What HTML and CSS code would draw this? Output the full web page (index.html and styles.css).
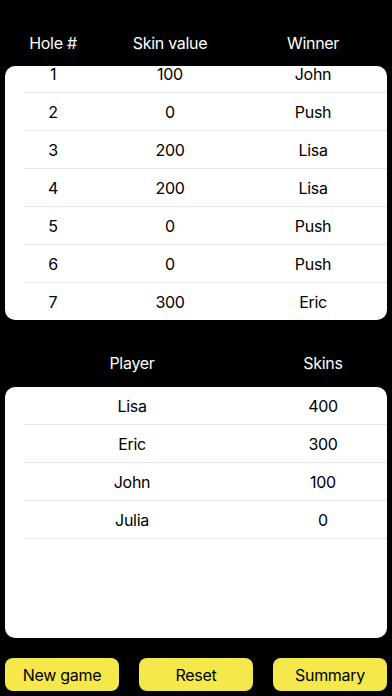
FILE: index.html
```html
<!DOCTYPE html>
<html>
<head>
<meta charset="utf-8">
<link rel="stylesheet" href="styles.css">
</head>
<body>
<div class="page">
  <div class="head head-holes">
    <span>Hole #</span><span>Skin value</span><span>Winner</span>
  </div>
  <div class="card card-holes">
    <div class="list list-scrolled">
      <div class="row row-holes"><span>1</span><span>100</span><span>John</span></div>
      <div class="row row-holes"><span>2</span><span>0</span><span>Push</span></div>
      <div class="row row-holes"><span>3</span><span>200</span><span>Lisa</span></div>
      <div class="row row-holes"><span>4</span><span>200</span><span>Lisa</span></div>
      <div class="row row-holes"><span>5</span><span>0</span><span>Push</span></div>
      <div class="row row-holes"><span>6</span><span>0</span><span>Push</span></div>
      <div class="row row-holes row-last"><span>7</span><span>300</span><span>Eric</span></div>
    </div>
  </div>
  <div class="head head-players">
    <span>Player</span><span>Skins</span>
  </div>
  <div class="card card-players">
    <div class="list">
      <div class="row row-players"><span>Lisa</span><span>400</span></div>
      <div class="row row-players"><span>Eric</span><span>300</span></div>
      <div class="row row-players"><span>John</span><span>100</span></div>
      <div class="row row-players"><span>Julia</span><span>0</span></div>
    </div>
  </div>
  <div class="buttons">
    <button class="btn">New game</button>
    <button class="btn">Reset</button>
    <button class="btn">Summary</button>
  </div>
</div>
</body>
</html>
```
FILE: styles.css
```css
html, body {
  margin: 0;
  padding: 0;
  background: #000;
}
body {
  font-family: Inter, "Noto Sans", sans-serif;
  font-size: 16px;
  letter-spacing: -0.3px;
  color: #000;
}
.page {
  width: 392px;
  height: 696px;
  padding: 0 5px;
  box-sizing: border-box;
  display: flex;
  flex-direction: column;
}
.head {
  display: grid;
  height: 38px;
  align-items: center;
  color: #fff;
  text-align: center;
}
.head-holes {
  margin-top: 24px;
  margin-bottom: 4px;
}
.head-players {
  margin-top: 24px;
  margin-bottom: 5px;
}
.head-holes, .row-holes {
  grid-template-columns: 96px 138px 148px;
}
.head-players, .row-players {
  grid-template-columns: 254px 128px;
}
.card {
  background: #fff;
  border-radius: 10px;
  overflow: hidden;
}
.card-holes {
  height: 254px;
}
.card-players {
  height: 251px;
}
.list-scrolled {
  margin-top: -11px;
}
.row {
  display: grid;
  height: 38px;
  align-items: center;
  text-align: center;
  position: relative;
}
.row::after {
  content: "";
  position: absolute;
  left: 19px;
  right: 0;
  bottom: 0;
  height: 1px;
  background: #e6e6e8;
}
.row-last::after {
  display: none;
}
.buttons {
  margin-top: 20px;
  display: flex;
  justify-content: space-between;
}
.btn {
  width: 114px;
  height: 33px;
  border: none;
  border-radius: 8px;
  background: #f5e84b;
  color: #000;
  font-family: Inter, "Noto Sans", sans-serif;
  font-size: 16px;
  letter-spacing: -0.3px;
  padding: 0;
}
```
